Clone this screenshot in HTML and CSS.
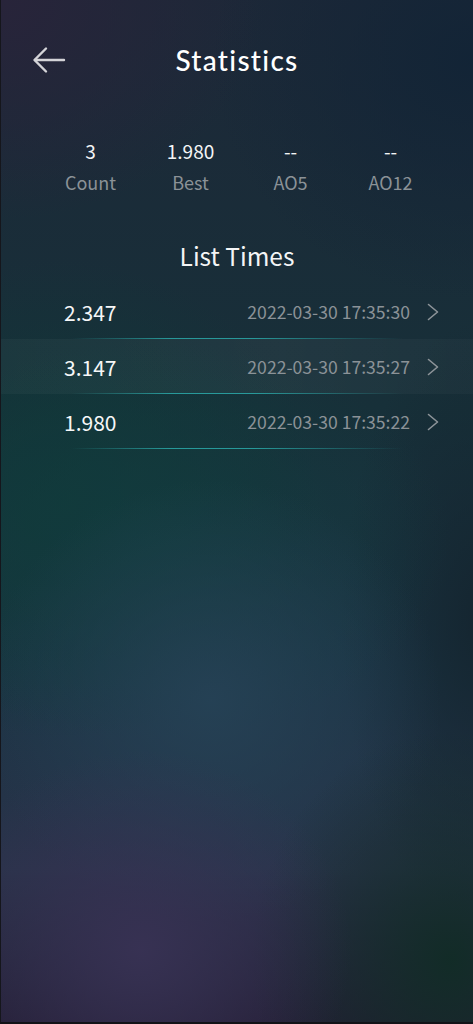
FILE: index.html
```html
<!DOCTYPE html>
<html lang="en">
<head>
<meta charset="utf-8">
<title>Statistics</title>
<link rel="stylesheet" href="styles.css">
</head>
<body>
<div class="screen">
  <header class="topbar">
    <button class="back" aria-label="Back">
      <svg width="34" height="28" viewBox="0 0 34 28" fill="none" stroke="#d4d4d8" stroke-width="2.4" stroke-linecap="round" stroke-linejoin="round">
        <path d="M32 14H3"/>
        <path d="M14 2.5L2.5 14L14 25.5"/>
      </svg>
    </button>
    <h1 class="title">Statistics</h1>
  </header>

  <section class="stats">
    <div class="stat"><div class="stat-value">3</div><div class="stat-label">Count</div></div>
    <div class="stat"><div class="stat-value">1.980</div><div class="stat-label">Best</div></div>
    <div class="stat"><div class="stat-value">--</div><div class="stat-label">AO5</div></div>
    <div class="stat"><div class="stat-value">--</div><div class="stat-label">AO12</div></div>
  </section>

  <h2 class="section-title">List Times</h2>

  <ul class="times">
    <li class="row">
      <span class="time">2.347</span>
      <span class="date">2022-03-30 17:35:30</span>
      <svg class="chev" width="12" height="18" viewBox="0 0 12 18" fill="none" stroke="#8d9499" stroke-width="1.6" stroke-linecap="round" stroke-linejoin="round"><path d="M1.5 1.5L10.5 9L1.5 16.5"/></svg>
    </li>
    <li class="row active">
      <span class="time">3.147</span>
      <span class="date">2022-03-30 17:35:27</span>
      <svg class="chev" width="12" height="18" viewBox="0 0 12 18" fill="none" stroke="#8d9499" stroke-width="1.6" stroke-linecap="round" stroke-linejoin="round"><path d="M1.5 1.5L10.5 9L1.5 16.5"/></svg>
    </li>
    <li class="row">
      <span class="time">1.980</span>
      <span class="date">2022-03-30 17:35:22</span>
      <svg class="chev" width="12" height="18" viewBox="0 0 12 18" fill="none" stroke="#8d9499" stroke-width="1.6" stroke-linecap="round" stroke-linejoin="round"><path d="M1.5 1.5L10.5 9L1.5 16.5"/></svg>
    </li>
  </ul>
</div>
</body>
</html>
```

FILE: styles.css
```css
* { box-sizing: border-box; }
html, body {
  margin: 0;
  padding: 0;
  height: 100%;
}
body {
  background: #101418;
  font-family: "Noto Sans CJK SC", "Noto Sans", sans-serif;
  color: #f2f3f4;
}
.screen {
  width: 473px;
  height: 1024px;
  overflow: hidden;
  border-left: 1px solid #15161c;
  border-bottom: 2px solid #121318;
  background:
    radial-gradient(ellipse 210px 200px at 140px 950px, rgba(56,50,84,0.95), rgba(56,50,84,0) 100%),
    radial-gradient(ellipse 200px 230px at 450px 960px, rgba(17,44,38,0.95), rgba(17,44,38,0) 100%),
    radial-gradient(ellipse 230px 220px at 210px 700px, rgba(38,66,86,0.9), rgba(38,66,86,0) 100%),
    radial-gradient(ellipse 300px 200px at 150px 540px, rgba(18,60,62,0.85), rgba(18,60,62,0) 100%),
    radial-gradient(ellipse 260px 240px at 60px 500px, rgba(15,56,56,0.9), rgba(15,56,56,0) 100%),
    radial-gradient(ellipse 260px 240px at 470px 60px, rgba(18,36,54,0.95), rgba(18,36,54,0) 100%),
    radial-gradient(ellipse 260px 220px at 0px 0px, rgba(40,36,58,1), rgba(40,36,58,0) 100%),
    radial-gradient(ellipse 140px 300px at 480px 620px, rgba(20,36,46,0.9), rgba(20,36,46,0) 100%),
    linear-gradient(180deg, #1d2838 0%, #173039 40%, #1b3444 65%, #29334a 85%, #241f36 100%);
}

.topbar {
  position: relative;
  height: 136px;
  display: flex;
  justify-content: center;
  padding-top: 38px;
}
.back {
  position: absolute;
  left: 31px;
  top: 46px;
  padding: 0;
  border: 0;
  background: none;
  display: flex;
}
.title {
  margin: 0;
  font-family: "Lato", "Noto Sans", sans-serif;
  font-weight: 500;
  font-size: 28px;
  letter-spacing: 1.3px;
  line-height: 44px;
  color: #ffffff;
}

.stats {
  display: grid;
  grid-template-columns: repeat(4, 100px);
  justify-content: center;
  margin-left: 7px;
  text-align: center;
}
.stat-value {
  font-size: 19px;
  line-height: 30px;
  color: #f4f5f6;
}
.stat-label {
  font-size: 18px;
  line-height: 32px;
  color: #8b9297;
}

.section-title {
  margin: 41px 0 0;
  font-weight: 400;
  font-size: 24.5px;
  line-height: 34px;
  text-align: center;
  color: #f4f5f6;
}

.times {
  list-style: none;
  margin: 11px 0 0;
  padding: 0;
}
.row {
  position: relative;
  height: 55px;
  display: flex;
  align-items: center;
  padding: 0 34px 0 63px;
}
.row::after {
  content: "";
  position: absolute;
  left: 70px;
  right: 70px;
  bottom: 0;
  height: 1px;
  background: linear-gradient(90deg, rgba(40,160,160,0) 0%, rgba(42,170,170,0.85) 30%, rgba(42,170,170,0.85) 55%, rgba(40,160,160,0) 100%);
}
.row.active {
  background: linear-gradient(90deg, rgba(255,255,255,0.03) 0%, rgba(255,255,255,0.045) 60%, rgba(255,255,255,0.025) 100%);
}
.time {
  font-size: 21px;
  color: #f6f7f8;
  flex: 1;
}
.date {
  font-size: 17.6px;
  color: #8b9297;
  margin-right: 17px;
}
.chev {
  display: block;
  margin-top: 1px;
}
```
